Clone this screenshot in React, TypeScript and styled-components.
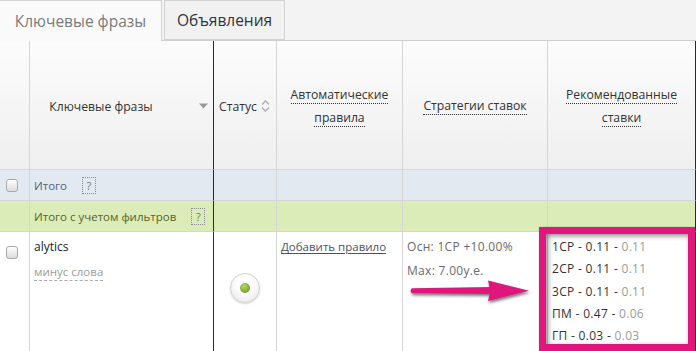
import styled, { createGlobalStyle } from 'styled-components';

const GlobalStyle = createGlobalStyle`
  html, body {
    margin: 0;
    padding: 0;
    background: #ffffff;
  }
  body {
    font-family: 'Open Sans', 'Liberation Sans', sans-serif;
    color: #333;
  }
`;

const PINK = '#e0167c';

type Bid = { name: string; bid: string; rec: string };

const bids: Bid[] = [
  { name: '1CP', bid: '0.11', rec: '0.11' },
  { name: '2CP', bid: '0.11', rec: '0.11' },
  { name: '3CP', bid: '0.11', rec: '0.11' },
  { name: 'ПМ', bid: '0.47', rec: '0.06' },
  { name: 'ГП', bid: '0.03', rec: '0.03' },
];

const SortDown = () => (
  <svg width="9" height="6" viewBox="0 0 9 6">
    <path d="M0 0.5 H9 L4.5 5.5 Z" fill="#9a9a9a" />
  </svg>
);

const SortBoth = () => (
  <svg width="9" height="14" viewBox="0 0 9 14">
    <path d="M1 5.5 L4.5 2 L8 5.5" fill="none" stroke="#b5b5b5" strokeWidth="1.6" />
    <path d="M1 8.5 L4.5 12 L8 8.5" fill="none" stroke="#b5b5b5" strokeWidth="1.6" />
  </svg>
);

const PinkArrow = () => (
  <ArrowSvg width="128" height="30" viewBox="0 0 128 30">
    <defs>
      <filter id="arrowShadow" x="-10%" y="-40%" width="120%" height="200%">
        <feDropShadow dx="1" dy="2" stdDeviation="1.6" floodColor="#000" floodOpacity="0.55" />
      </filter>
    </defs>
    <g filter="url(#arrowShadow)">
      <path d="M6 11.2 L86 10 L86 17 L6 16.2 Q3 13.7 6 11.2 Z" fill={PINK} />
      <path d="M82 3.5 L123 13.8 L82 24 Q85 13.8 82 3.5 Z" fill={PINK} />
    </g>
  </ArrowSvg>
);

export default function App() {
  return (
    <Page>
      <GlobalStyle />
      <TabBar>
        <Tab $active>Ключевые фразы</Tab>
        <Tab>Объявления</Tab>
      </TabBar>

      <Grid>
        <HeadCell />
        <HeadCell $dark>
          <HeadLabel>Ключевые фразы</HeadLabel>
          <SortDown />
        </HeadCell>
        <HeadCell $left>
          <span>Статус</span>
          <SortBoth />
        </HeadCell>
        <HeadCell>
          <HeadLines>
            <Dotted>Автоматические</Dotted>
            <Dotted>правила</Dotted>
          </HeadLines>
        </HeadCell>
        <HeadCell>
          <HeadLines>
            <Dotted>Стратегии ставок</Dotted>
          </HeadLines>
        </HeadCell>
        <HeadCell $last>
          <HeadLines>
            <Dotted>Рекомендованные</Dotted>
            <Dotted>ставки</Dotted>
          </HeadLines>
        </HeadCell>

        <TotalCell $tone="blue">
          <Checkbox />
        </TotalCell>
        <TotalCell $tone="blue" $dark>
          <TotalText $tone="blue">Итого</TotalText>
          <Hint>?</Hint>
        </TotalCell>
        <TotalCell $tone="blue" />
        <TotalCell $tone="blue" />
        <TotalCell $tone="blue" />
        <TotalCell $tone="blue" $last />

        <TotalCell $tone="green" />
        <TotalCell $tone="green" $dark>
          <TotalText $tone="green">Итого с учетом фильтров</TotalText>
          <Hint>?</Hint>
        </TotalCell>
        <TotalCell $tone="green" />
        <TotalCell $tone="green" />
        <TotalCell $tone="green" />
        <TotalCell $tone="green" $last />

        <BodyCell>
          <CheckWrap>
            <Checkbox />
          </CheckWrap>
        </BodyCell>
        <BodyCell $dark>
          <Keyword>alytics</Keyword>
          <MinusWords>минус слова</MinusWords>
        </BodyCell>
        <StatusCell>
          <StatusButton>
            <StatusDot />
          </StatusButton>
        </StatusCell>
        <BodyCell>
          <RuleLink>Добавить правило</RuleLink>
        </BodyCell>
        <BodyCell>
          <Muted>Осн: 1CP +10.00%</Muted>
          <Muted>Max: 7.00y.e.</Muted>
        </BodyCell>
        <BodyCell $last>
          <BidList>
            {bids.map((b) => (
              <BidLine key={b.name}>
                {b.name} - {b.bid} - <BidRec>{b.rec}</BidRec>
              </BidLine>
            ))}
          </BidList>
        </BodyCell>
      </Grid>

      <PinkArrow />
      <Highlight />
    </Page>
  );
}

const Page = styled.div`
  position: relative;
  width: 696px;
  height: 351px;
  overflow: hidden;
  background: #fff;
`;

const TabBar = styled.div`
  display: flex;
  gap: 2px;
  height: 41px;
  box-sizing: border-box;
  border-bottom: 1px solid #cfcfcf;
  background: #f3f3f3;
`;

const Tab = styled.div<{ $active?: boolean }>`
  display: flex;
  align-items: center;
  justify-content: center;
  box-sizing: border-box;
  height: ${(p) => (p.$active ? '41px' : '40px')};
  margin-bottom: ${(p) => (p.$active ? '-1px' : '0')};
  width: ${(p) => (p.$active ? '162px' : '121px')};
  border: 1px solid #d2d2d2;
  border-left: ${(p) => (p.$active ? 'none' : '1px solid #d2d2d2')};
  border-bottom: ${(p) => (p.$active ? 'none' : '1px solid #d2d2d2')};
  background: ${(p) => (p.$active ? '#fafafa' : '#f1f1f1')};
  color: ${(p) => (p.$active ? '#7a7a7a' : '#2f3440')};
  font-size: 15.5px;
  line-height: 1;
  white-space: nowrap;
  padding-top: 2px;
`;

const Grid = styled.div`
  display: grid;
  grid-template-columns: 30px 184px 63px 126px 145px 148px;
  grid-template-rows: 129px 31px 31px 120px;
`;

const CellBase = styled.div<{ $dark?: boolean; $last?: boolean }>`
  box-sizing: border-box;
  border-bottom: 1px solid #d6d6d6;
  border-right: 1px solid ${(p) => (p.$dark || p.$last ? '#2a2a2a' : '#d6d6d6')};
  min-width: 0;
`;

const HeadCell = styled(CellBase)<{ $left?: boolean }>`
  display: flex;
  align-items: center;
  justify-content: ${(p) => (p.$left ? 'flex-start' : 'center')};
  gap: ${(p) => (p.$left ? '4px' : '0')};
  padding: ${(p) => (p.$left ? '0 0 0 5px' : '0 5px 0 0')};
  background: linear-gradient(#fcfcfc, #efefef);
  font-size: 12.2px;
  color: #333;
  padding-top: 2px;
  white-space: nowrap;
`;

const HeadLabel = styled.span`
  flex: 1;
  text-align: center;
  margin-right: 27px;
`;

const HeadLines = styled.div`
  display: flex;
  flex-direction: column;
  align-items: center;
  gap: 5px;
  padding-left: 5px;
`;

const Dotted = styled.span`
  line-height: 17px;
  border-bottom: 1px dotted #333;
`;

const TotalCell = styled(CellBase)<{ $tone: 'blue' | 'green' }>`
  display: flex;
  align-items: center;
  gap: 15px;
  padding-left: ${(p) => (p.$dark ? '4px' : '6px')};
  background: ${(p) => (p.$tone === 'blue' ? '#e2e9f1' : '#dcecb8')};
  white-space: nowrap;
`;

const TotalText = styled.span<{ $tone: 'blue' | 'green' }>`
  font-size: 11.5px;
  color: ${(p) => (p.$tone === 'blue' ? '#52627e' : '#56642a')};
`;

const Hint = styled.span`
  flex-shrink: 0;
  display: flex;
  align-items: center;
  justify-content: center;
  box-sizing: border-box;
  width: 14px;
  height: 17px;
  border: 1px dotted #8a8a8a;
  font-size: 11px;
  color: #777;
`;

const Checkbox = styled.span`
  display: block;
  box-sizing: border-box;
  width: 12px;
  height: 13px;
  border: 1px solid #a9a9a9;
  border-radius: 3px;
  background: linear-gradient(#ffffff, #dcdcdc);
`;

const CheckWrap = styled.div`
  padding: 10px 0 0 2px;
`;

const BodyCell = styled(CellBase)`
  display: flex;
  flex-direction: column;
  gap: 2px;
  padding: 4px 0 0 4px;
  font-size: 12px;
  letter-spacing: 0.3px;
  line-height: 22px;
  white-space: nowrap;
`;

const Keyword = styled.span`
  color: #222;
  letter-spacing: 0;
`;

const MinusWords = styled.span`
  align-self: flex-start;
  color: #9a9a9a;
  font-size: 11.5px;
  letter-spacing: 0;
  line-height: 17px;
  margin-top: 3px;
  border-bottom: 1px dashed #aaa;
`;

const StatusCell = styled(CellBase)`
  display: flex;
  justify-content: center;
  padding-top: 41px;
`;

const StatusButton = styled.span`
  display: flex;
  align-items: center;
  justify-content: center;
  box-sizing: border-box;
  width: 30px;
  height: 30px;
  border-radius: 50%;
  border: 1px solid #d2d2d2;
  background: radial-gradient(circle at 50% 35%, #ffffff 30%, #e6e6e6 100%);
  box-shadow: 0 1px 2px rgba(0, 0, 0, 0.18);
`;

const StatusDot = styled.span`
  width: 10px;
  height: 10px;
  border-radius: 50%;
  background: radial-gradient(circle at 40% 35%, #b4d86a, #6f9c1f 80%);
`;

const RuleLink = styled.span`
  align-self: flex-start;
  color: #4b5266;
  font-size: 11.5px;
  letter-spacing: 0;
  text-decoration: underline;
  text-underline-offset: 2px;
`;

const Muted = styled.span`
  color: #6a6a6a;
`;

const BidList = styled.div`
  display: flex;
  flex-direction: column;
`;

const BidLine = styled.span`
  color: #333;
  line-height: 22.3px;
`;

const BidRec = styled.span`
  color: #9a9a9a;
`;

const ArrowSvg = styled.svg`
  position: absolute;
  left: 406px;
  top: 277px;
`;

const Highlight = styled.div`
  position: absolute;
  left: 539px;
  top: 227px;
  width: 156px;
  height: 124px;
  box-sizing: border-box;
  border: 7px solid ${PINK};
  box-shadow: inset 2px 2px 5px rgba(0, 0, 0, 0.45), 1px 1px 3px rgba(0, 0, 0, 0.3);
  pointer-events: none;
`;
